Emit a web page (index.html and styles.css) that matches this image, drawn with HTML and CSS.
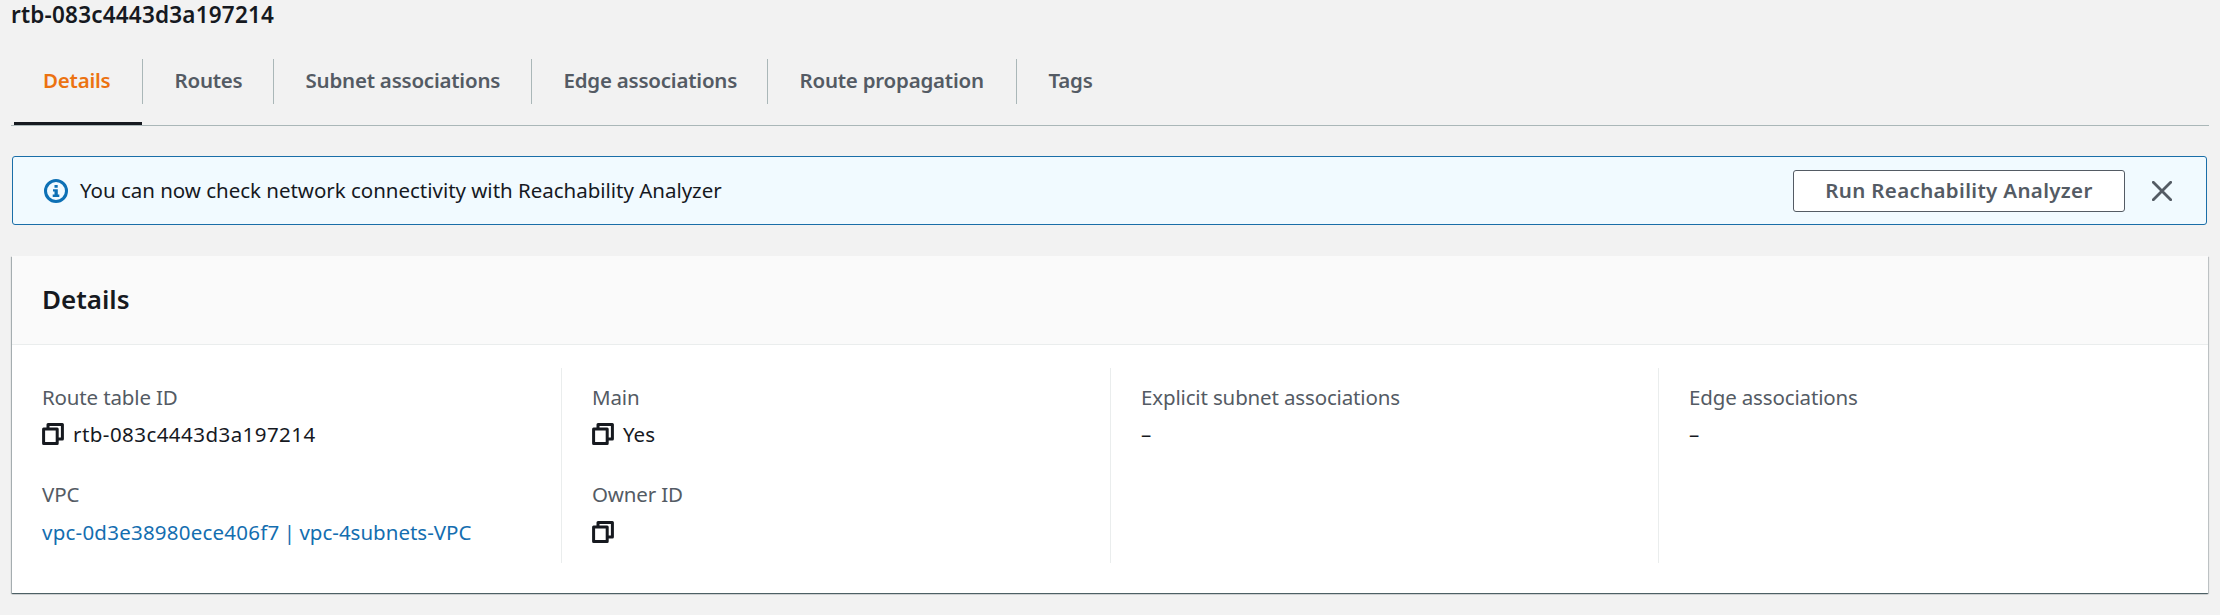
FILE: index.html
```html
<!DOCTYPE html>
<html lang="en">
<head>
<meta charset="utf-8">
<title>Route table details</title>
<link rel="stylesheet" href="styles.css">
</head>
<body>
<svg width="0" height="0" class="defs">
  <symbol id="copy" viewBox="0 0 22 22">
    <path d="M6 6V1.6h14.4V16H16M1.6 6h13.6v14.4H1.6z" fill="none" stroke="currentColor" stroke-width="3" stroke-linejoin="round"/>
  </symbol>
</svg>
<main class="page">
  <h1 class="title">rtb-083c4443d3a197214</h1>
  <nav class="tabs">
    <a class="tab active"><span class="tab-label w-details">Details</span></a>
    <a class="tab"><span class="tab-label w-routes">Routes</span></a>
    <a class="tab"><span class="tab-label w-subnet">Subnet associations</span></a>
    <a class="tab"><span class="tab-label w-edge">Edge associations</span></a>
    <a class="tab"><span class="tab-label w-prop">Route propagation</span></a>
    <a class="tab"><span class="tab-label">Tags</span></a>
  </nav>
  <section class="alert">
    <svg class="info" viewBox="0 0 24 24" width="24" height="24">
      <circle cx="12" cy="12" r="10.5" fill="none" stroke="#0d70b5" stroke-width="3"/>
      <path d="M10.5 6h3.2v2.8h-3.2zM9 10.2h4.8v5.2h1.5V18H8.7v-2.6h1.8v-2.8H9z" fill="#0d70b5"/>
    </svg>
    <p class="message">You can now check network connectivity with Reachability Analyzer</p>
    <button class="run">Run Reachability Analyzer</button>
    <svg class="close" viewBox="0 0 20 20" width="20" height="20">
      <path d="M1.3 1.3l17.4 17.4M18.7 1.3L1.3 18.7" stroke="#545b64" stroke-width="2.8" fill="none" stroke-linecap="round"/>
    </svg>
  </section>
  <section class="panel">
    <header class="panel-head"><h2 class="panel-title">Details</h2></header>
    <div class="cols">
      <div class="col">
        <div class="field">
          <div class="label">Route table ID</div>
          <div class="value id"><svg class="copy"><use href="#copy"/></svg>rtb-083c4443d3a197214</div>
        </div>
        <div class="field second">
          <div class="label">VPC</div>
          <a class="value link"><span><span class="vpc-id">vpc-0d3e38980ece406f7</span> | vpc-4subnets-VPC</span></a>
        </div>
      </div>
      <div class="col">
        <div class="field">
          <div class="label">Main</div>
          <div class="value"><svg class="copy"><use href="#copy"/></svg>Yes</div>
        </div>
        <div class="field second">
          <div class="label">Owner ID</div>
          <div class="value"><svg class="copy"><use href="#copy"/></svg></div>
        </div>
      </div>
      <div class="col">
        <div class="field">
          <div class="label">Explicit subnet associations</div>
          <div class="value">–</div>
        </div>
      </div>
      <div class="col">
        <div class="field">
          <div class="label">Edge associations</div>
          <div class="value">–</div>
        </div>
      </div>
    </div>
  </section>
</main>
</body>
</html>
```
FILE: styles.css
```css
* { box-sizing: border-box; }
body {
  margin: 0;
  background: #f2f2f2;
  color: #16191f;
  font: 20.5px/28px "Noto Sans", "Open Sans", sans-serif;
}
.defs { position: absolute; }
.page { padding: 0 11px; height: 615px; }
.title {
  margin: 0;
  font-size: 22.5px;
  line-height: 30px;
  font-weight: 600;
  letter-spacing: 0.2px;
}
.tabs {
  display: flex;
  margin-top: 29px;
  padding-left: 3px;
  border-bottom: 1px solid #aab7b8;
  height: 67px;
}
.tab {
  color: #545b64;
  font-weight: 600;
  letter-spacing: -0.22px;
}
.tab-label {
  display: block;
  height: 45px;
  line-height: 43px;
  padding-left: 31.5px;
  white-space: nowrap;
}
.tab:not(:last-child) .tab-label { border-right: 1px solid #aab7b8; }
.active { width: 128px; margin-right: 1px; color: #ec7211; border-bottom: 3px solid #16191f; }
.active .tab-label { padding-left: 29px; }
.w-details { width: 129px; }
.w-routes { width: 131px; }
.w-subnet { width: 258px; }
.w-edge { width: 236px; }
.w-prop { width: 249px; }
.alert {
  display: flex;
  align-items: center;
  height: 69px;
  margin: 30px 2px 0 1px;
  padding: 0 34px 0 31px;
  background: #f1faff;
  border: 1px solid #1a6ea8;
  border-radius: 3px;
}
.message { margin: 0 auto 0 12px; padding-bottom: 2px; letter-spacing: -0.02px; white-space: nowrap; }
.run {
  width: 332px;
  height: 42px;
  padding: 0 0 2px;
  background: #fff;
  border: 1px solid #545b64;
  border-radius: 3px;
  color: #545b64;
  font: 600 20.5px/28px "Noto Sans", "Open Sans", sans-serif;
  letter-spacing: 0.33px;
  white-space: nowrap;
}
.close { margin-left: 27px; }
.panel {
  height: 337px;
  margin: 31px 1px 0;
  background: #fff;
  box-shadow: 0 1px 1px 0 rgba(0, 28, 36, 0.5), 1px 1px 1px 0 rgba(0, 28, 36, 0.15), -1px 1px 1px 0 rgba(0, 28, 36, 0.25);
}
.panel-head {
  height: 89px;
  padding: 25px 30px 0;
  background: #fafafa;
  border-bottom: 1px solid #eaeded;
}
.panel-title { margin: 0; font-size: 26px; line-height: 36px; font-weight: 600; }
.cols {
  display: grid;
  grid-template-columns: 549px 549px 548px 1fr;
  padding-top: 23px;
}
.col {
  height: 195px;
  padding: 15px 0 0 30px;
  display: flex;
  flex-direction: column;
  gap: 32px;
}
.col + .col { border-left: 1px solid #eaeded; }
.field { display: flex; flex-direction: column; gap: 9px; }
.second { gap: 10px; }
.label { color: #545b64; letter-spacing: -0.15px; }
.value { display: flex; align-items: center; height: 28px; white-space: nowrap; }
.id { letter-spacing: 0.45px; }
.link { color: #146eb0; word-spacing: -1px; }
.vpc-id { letter-spacing: 0.23px; }
.copy { width: 22px; height: 22px; margin-right: 9px; }
```
